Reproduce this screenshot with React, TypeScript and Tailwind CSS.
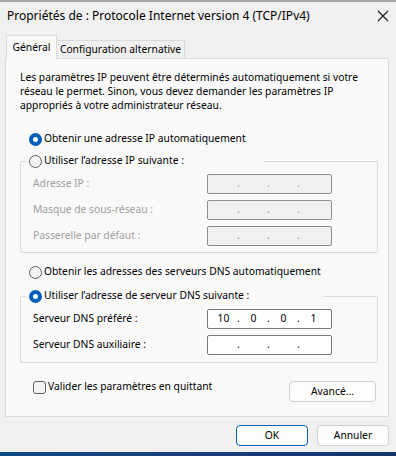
import React from 'react';

const font = { fontFamily: '"Noto Sans", "Open Sans", Arial, sans-serif' };

const Radio = ({ checked }: { checked?: boolean }) =>
  checked ? (
    <span className="flex h-[13px] w-[13px] shrink-0 items-center justify-center rounded-full bg-[#005fb8]">
      <span className="h-[5px] w-[5px] rounded-full bg-white" />
    </span>
  ) : (
    <span className="h-[13px] w-[13px] shrink-0 rounded-full border border-[#5d5d5d] bg-[#f3f3f3]" />
  );

const RadioRow = ({ checked, label }: { checked?: boolean; label: string }) => (
  <div className="flex h-[16px] items-center gap-[2px] whitespace-nowrap">
    <Radio checked={checked} />
    <span>{label}</span>
  </div>
);

// IP address edit with 4 octet segments separated by dots
const IpField = ({ octets, disabled }: { octets?: string[]; disabled?: boolean }) => (
  <div
    className={
      'flex h-[20px] w-[125px] items-center rounded-[2px] border pl-[2px] ' +
      (disabled ? 'border-[#8f8f8f] bg-[#f0f0f0]' : 'border-[#7a7a7a] bg-white')
    }
  >
    {[0, 1, 2, 3].map((i) => (
      <React.Fragment key={i}>
        <span className="w-[27px] text-center">{octets ? octets[i] : ''}</span>
        {i < 3 && <span className={'w-[3px] text-center ' + (disabled ? 'text-[#8a8a8a]' : '')}>.</span>}
      </React.Fragment>
    ))}
  </div>
);

const FieldRow = ({ label, disabled, octets }: { label: string; disabled?: boolean; octets?: string[] }) => (
  <div className="flex h-[20px] items-center">
    <span className={'w-[174px] ' + (disabled ? 'text-[#a0a0a0]' : '')}>{label}</span>
    <IpField disabled={disabled} octets={octets} />
  </div>
);

const App = () => {
  return (
    <div className="flex h-[456px] w-[396px] flex-col overflow-hidden bg-[#f0f0f0] text-[10.3px] text-black" style={font}>
      <div className="h-[2px] bg-[#a6a6a6]" />
      {/* title bar */}
      <div className="flex h-[28px] items-center justify-between pl-[7px] pr-[6px] text-[12px]">
        <span className="whitespace-nowrap">Propriétés de : Protocole Internet version 4 (TCP/IPv4)</span>
        <svg width="12" height="12" viewBox="0 0 12 12" className="mr-[1px]">
          <path d="M1 1 L11 11 M11 1 L1 11" stroke="#1a1a1a" strokeWidth="1.1" />
        </svg>
      </div>

      {/* tabs */}
      <div className="ml-[5px] mt-[5px] flex items-end">
        <div className="relative z-10 -mb-px ml-px flex h-[24px] w-[51px] items-start justify-center border border-b-0 border-[#dcdcdc] bg-[#f9f9f9] pt-[4px]">
          Général
        </div>
        <div className="flex h-[18px] w-[128px] items-center justify-center border border-b-0 border-l-0 border-[#d9d9d9] bg-[#f0f0f0]">
          Configuration alternative
        </div>
      </div>

      {/* tab panel */}
      <div className="ml-[5px] flex h-[359px] w-[384px] flex-col border border-[#dcdcdc] bg-[#f9f9f9] pl-[14px] pr-[10px] pt-[11px]">
        <p className="whitespace-nowrap leading-[14px]">
          Les paramètres IP peuvent être déterminés automatiquement si votre
          <br />
          réseau le permet. Sinon, vous devez demander les paramètres IP
          <br />
          appropriés à votre administrateur réseau.
        </p>

        <div className="ml-[9px] mt-[19px]">
          <RadioRow checked label="Obtenir une adresse IP automatiquement" />
        </div>

        <fieldset className="mt-[6px] rounded-[2px] border border-[#dcdcdc] pb-[6px]">
          <legend className="ml-[6px] w-[236px] pl-[2px]">
            <RadioRow label="Utiliser l’adresse IP suivante :" />
          </legend>
          <div className="mt-[5px] flex flex-col gap-[6px] pl-[12px]">
            <FieldRow disabled label="Adresse IP :" />
            <FieldRow disabled label="Masque de sous-réseau :" />
            <FieldRow disabled label="Passerelle par défaut :" />
          </div>
        </fieldset>

        <div className="ml-[9px] mt-[11px]">
          <RadioRow label="Obtenir les adresses des serveurs DNS automatiquement" />
        </div>

        <fieldset className="mt-[8px] rounded-[2px] border border-[#dcdcdc] pb-[7px]">
          <legend className="ml-[6px] w-[296px] pl-[2px]">
            <RadioRow checked label="Utiliser l’adresse de serveur DNS suivante :" />
          </legend>
          <div className="mt-[5px] flex flex-col gap-[6px] pl-[12px]">
            <FieldRow label="Serveur DNS préféré :" octets={['10', '0', '0', '1']} />
            <FieldRow label="Serveur DNS auxiliaire :" />
          </div>
        </fieldset>

        <div className="mt-[18px] flex items-start justify-between pr-[2px]">
          <div className="ml-[13px] mt-[-1px] flex h-[14px] items-center gap-[2px] whitespace-nowrap">
            <span className="h-[13px] w-[13px] rounded-[3px] border border-[#5d5d5d] bg-[#f3f3f3]" />
            <span>Valider les paramètres en quittant</span>
          </div>
          <button className="h-[21px] w-[87px] rounded-[4px] border border-[#d0d0d0] bg-[#fdfdfd]">Avancé...</button>
        </div>
      </div>

      {/* dialog buttons */}
      <div className="mr-[7px] mt-[8px] flex justify-end gap-[9px]">
        <button className="h-[21px] w-[72px] rounded-[4px] border border-[#005fb8] bg-[#fdfdfd]">OK</button>
        <button className="h-[21px] w-[72px] rounded-[4px] border border-[#d0d0d0] bg-[#fdfdfd]">Annuler</button>
      </div>

      <div className="mt-auto h-[4px] bg-gradient-to-r from-[#0f4a8a] via-[#1c3f7a] to-[#14346b]" />
    </div>
  );
};

export default App;
